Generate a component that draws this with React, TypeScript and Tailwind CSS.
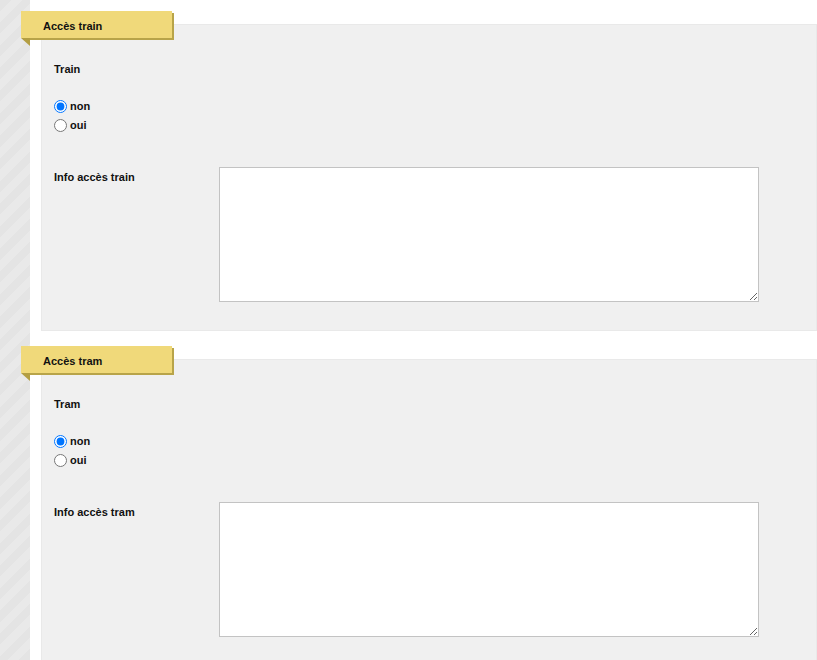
import React from 'react';

interface AccessSectionProps {
  title: string;
  question: string;
  infoLabel: string;
  name: string;
}

const AccessSection: React.FC<AccessSectionProps> = ({ title, question, infoLabel, name }) => {
  return (
    <section className="mb-[15px]">
      {/* ribbon label, overlapping the panel */}
      <div className="relative z-10 ml-[-20px] mb-[-14px] flex h-[27px] w-[151px] items-center bg-[#f0d97a] pl-[22px] pt-[3px] text-[11px] font-bold text-[#111] shadow-[2px_2px_0_#b8a449]">
        {title}
        <span className="absolute left-0 top-full h-0 w-0 border-l-[9px] border-t-[8px] border-l-transparent border-t-[#b39e43]" />
      </div>
      <div className="border border-[#e9e9e9] bg-[#f0f0f0] pl-[12px] pt-[38px] pb-[28px]">
        <div className="text-[11px] font-bold leading-[13px] text-[#111]">{question}</div>
        <div className="mt-[21px] flex flex-col">
          <label className="flex h-[19px] items-center gap-[3px] text-[11px] font-bold text-[#111]">
            <input type="radio" name={name} defaultChecked className="h-[13px] w-[13px]" />
            non
          </label>
          <label className="flex h-[19px] items-center gap-[3px] text-[11px] font-bold text-[#111]">
            <input type="radio" name={name} className="h-[13px] w-[13px]" />
            oui
          </label>
        </div>
        <div className="mt-[32px] flex">
          <div className="w-[165px] pt-[4px] text-[11px] font-bold leading-[13px] text-[#111]">{infoLabel}</div>
          <textarea className="h-[135px] w-[540px] border border-[#c3c3c3] bg-white" />
        </div>
      </div>
    </section>
  );
};

export default function App() {
  return (
    <div className="flex min-h-screen bg-white font-['Liberation_Sans',Arial,sans-serif]">
      <div className="w-[30px] shrink-0 bg-[repeating-linear-gradient(135deg,#e4e4e4_0px,#e4e4e4_8px,#e9e9e9_8px,#e9e9e9_16px)]" />
      <div className="flex-1 pl-[11px] pt-[11px]">
        <AccessSection title="Accès train" question="Train" infoLabel="Info accès train" name="train" />
        <AccessSection title="Accès tram" question="Tram" infoLabel="Info accès tram" name="tram" />
      </div>
    </div>
  );
}
